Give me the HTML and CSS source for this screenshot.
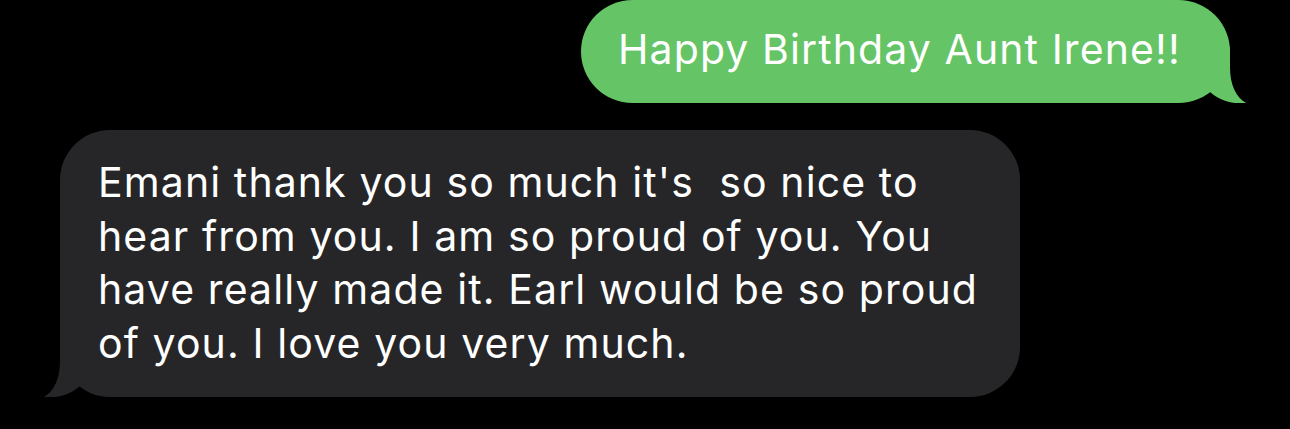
FILE: index.html
```html
<!DOCTYPE html>
<html lang="en">
<head>
    <meta charset="UTF-8">
    <meta name="viewport" content="width=device-width, initial-scale=1.0">
    <title>Messages</title>
    <link rel="stylesheet" href="styles.css">
</head>
<body>
    <div class="thread">
        <!-- Outgoing message -->
        <div class="bubble sent">
            <span>Happy Birthday Aunt Irene!!</span>
            <svg class="tail" width="52" height="56" viewBox="0 0 52 56">
                <path d="M16 0 L36 0 L36 20 C36 38 42 50 52 56 C40 57.5 26 54 16 45 Z" />
            </svg>
        </div>

        <!-- Incoming message -->
        <div class="bubble received">
            <span>Emani thank you so much it's&nbsp; so nice to<br>
            hear from you. I am so proud of you. You<br>
            have really made it. Earl would be so proud<br>
            of you. I love you very much.</span>
            <svg class="tail" width="52" height="56" viewBox="0 0 52 56">
                <path d="M16 0 L36 0 L36 20 C36 38 42 50 52 56 C40 57.5 26 54 16 45 Z" />
            </svg>
        </div>
    </div>
</body>
</html>
```

FILE: styles.css
```css
body {
    margin: 0;
    padding: 0;
    background-color: #000;
    font-family: Inter, "Open Sans", sans-serif;
    color: #fff;
}

.thread {
    width: 1290px;
    height: 429px;
    display: flex;
    flex-direction: column;
    gap: 27px;
}

.bubble {
    position: relative;
    font-size: 41px;
    line-height: 53.5px;
    letter-spacing: 1.1px;
    box-sizing: border-box;
}

.bubble span {
    position: relative;
    z-index: 1;
}

.tail {
    position: absolute;
    bottom: 0;
}

/* green bubble on the right */
.sent {
    align-self: flex-end;
    margin-right: 60px;
    width: 649px;
    height: 103px;
    padding: 23px 0 0 37px;
    background-color: #65c466;
    border-radius: 52px;
}

.sent .tail {
    right: -16px;
    fill: #65c466;
}

/* grey bubble on the left */
.received {
    align-self: flex-start;
    margin-left: 60px;
    width: 960px;
    height: 267px;
    padding: 26px 0 0 38px;
    background-color: #262628;
    border-radius: 50px;
}

.received .tail {
    left: -16px;
    fill: #262628;
    transform: scaleX(-1);
}
```
